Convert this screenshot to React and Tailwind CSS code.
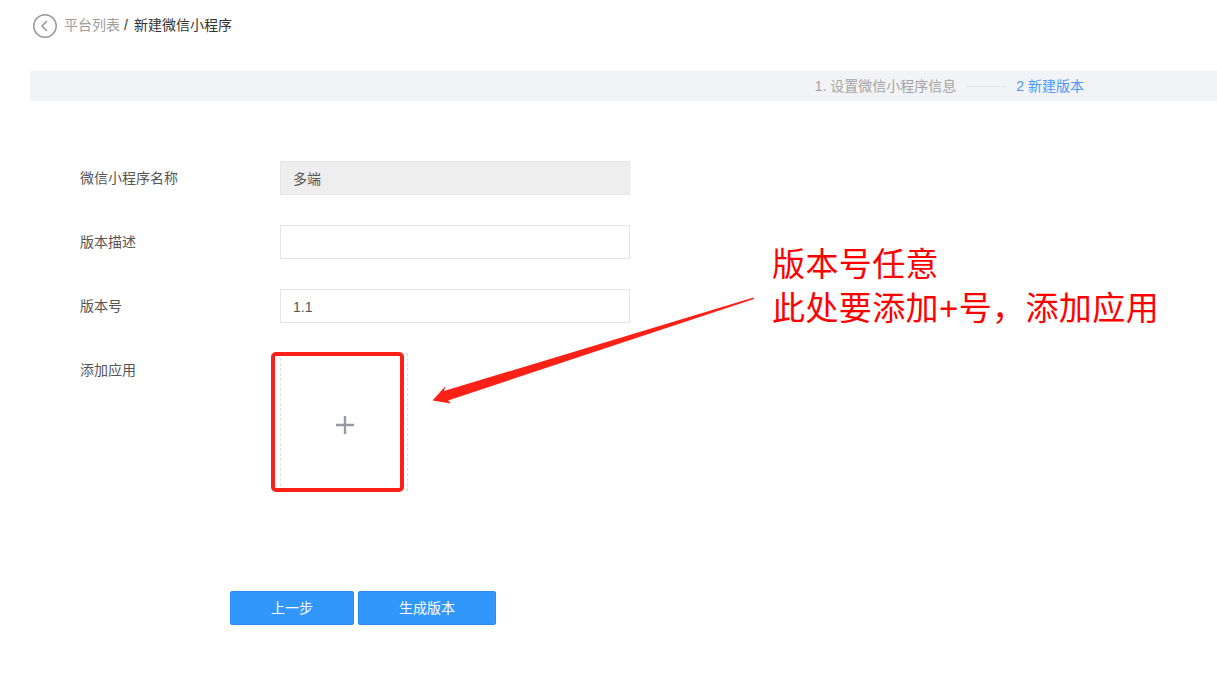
function Row({ label, value, disabled }) {
  return (
    <div className="flex h-[34px] mb-[30px]">
      <div className="w-[200px] text-[14px] leading-[34px] text-[#555]">{label}</div>
      <div className={`w-[350px] h-[34px] border border-[#e6e6e6] pl-3 text-[14px] leading-[34px] text-[#555] ${disabled ? "bg-[#eeeeee]" : "bg-white"}`}>
        {value}
      </div>
    </div>
  );
}

export default function App() {
  return (
    <div className="relative w-[1217px] h-[686px] overflow-hidden bg-white pl-[30px] font-['Liberation_Sans','Noto_Sans_CJK_SC',sans-serif]">
      <div className="h-[71px] flex items-start pt-[14px] pl-[3px]">
        <svg width="24" height="24" viewBox="0 0 24 24" fill="none" stroke="#9a9a9a">
          <circle cx="12" cy="12" r="11.25" strokeWidth="1.5" />
          <path d="M14 7 L9 12 L14 17" strokeWidth="1.6" />
        </svg>
        <div className="ml-[7px] text-[14px] leading-[22px]">
          <span className="text-[#a09d9b]">平台列表</span>
          <span className="text-[#333] ml-[4px] mr-[6px]">/</span>
          <span className="text-[#333]">新建微信小程序</span>
        </div>
      </div>

      <div className="h-[30px] bg-[#f2f3f7] flex items-center justify-end pr-[133px] text-[14px]">
        <span className="text-[#a3a3a3]">1. 设置微信小程序信息</span>
        <span className="w-[40px] h-px bg-[#e6e8ec] mx-[10px]" />
        <span className="text-[#4a98f7]">2 新建版本</span>
      </div>

      <div className="pl-[50px] pt-[60px]">
        <Row label="微信小程序名称" value="多端" disabled />
        <Row label="版本描述" value="" />
        <Row label="版本号" value="1.1" />
        <div className="flex h-[138px]">
          <div className="w-[200px] text-[14px] leading-[34px] text-[#555]">添加应用</div>
          <div className="w-[128px] h-[138px] border border-dashed border-[#dfdfdf] flex items-center justify-center pt-[6px] pl-[2px]">
            <svg width="18" height="18" viewBox="0 0 18 18" stroke="#969ba3" strokeWidth="2.4">
              <path d="M9 0 V18 M0 9 H18" />
            </svg>
          </div>
        </div>
      </div>

      <div className="flex gap-1 pl-[200px] mt-[100px]">
        <button className="w-[124px] h-[34px] rounded-[2px] bg-[#3297fb] border border-[#2a8cf0] text-white text-[14px]">上一步</button>
        <button className="w-[138px] h-[34px] rounded-[2px] bg-[#3297fb] border border-[#2a8cf0] text-white text-[14px]">生成版本</button>
      </div>

      <div className="absolute left-[271px] top-[352px] w-[133px] h-[140px] border-[4px] border-[#fb2117] rounded-[5px]" />

      <svg className="absolute left-0 top-0" width="1217" height="686" viewBox="0 0 1217 686">
        <polygon points="753.5,297.5 754,299 448,400.5 451,403.5 432.5,400.5 445.5,386 444,391" fill="#fb2117" />
      </svg>

      <div className="absolute left-[772px] top-[243px] text-[33px] leading-[44px] tracking-[0.4px] text-[#ff0000] whitespace-nowrap">
        版本号任意<br />此处要添加+号，添加应用
      </div>
    </div>
  );
}
